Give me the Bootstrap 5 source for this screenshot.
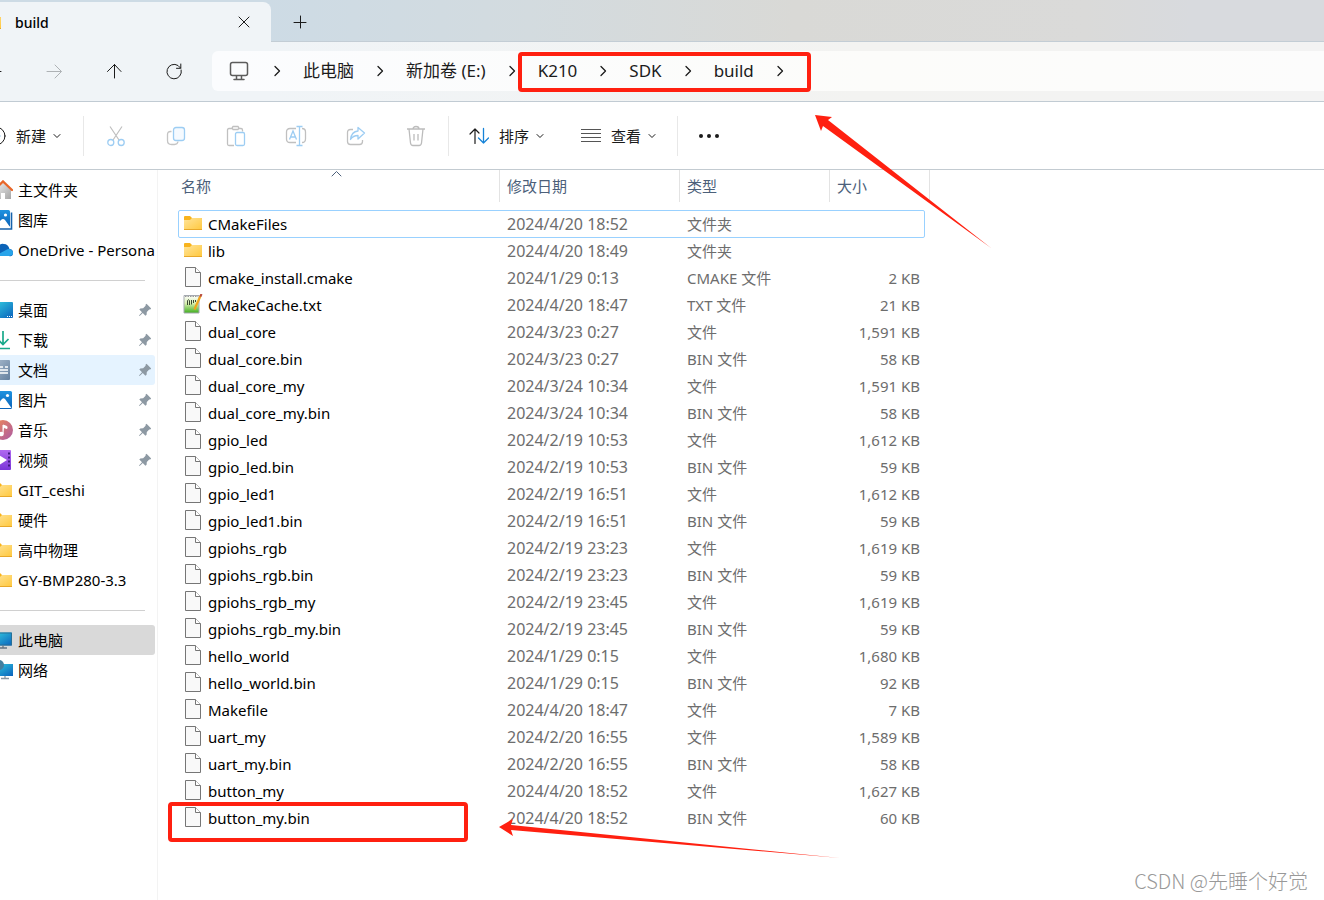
<!DOCTYPE html>
<html lang="zh-CN">
<head>
<meta charset="utf-8">
<meta name="viewport" content="width=device-width, initial-scale=1">
<title>build</title>
<link href="https://cdn.jsdelivr.net/npm/bootstrap@5.3.0/dist/css/bootstrap.min.css" rel="stylesheet">
<style>
body{font-family:"Noto Sans","Noto Sans CJK SC",sans-serif;font-size:15px;line-height:20px;color:#000;background:#fff;overflow-x:hidden}
svg{flex-shrink:0;display:block}
.ln{fill:none;stroke:currentColor;stroke-linecap:round;stroke-linejoin:round}
button{border:0;background:none;padding:0;color:#1b1b1b}
a{color:inherit;text-decoration:none}
.tabstrip{height:42px;padding-top:2px;background:linear-gradient(90deg,#cddbe5 20%,#d3dbdf 40%,#d9d9d6 60%,#dadad9 82%,#d8dade 90%);box-shadow:inset 0 -1px #c3cdd5}
.wintab{width:271px;background:#f0f4f7;border-radius:0 8px 0 0;padding:0 18px 0 0}
.wintab .fold{margin-left:-18px}
.wintab .name{margin-left:13px;font-weight:500;font-size:14px;line-height:22px;padding-top:2px}
.addtab{width:58px}
.locbar{height:60px;padding:9px 0 10px;background:linear-gradient(90deg,#f0f4f7 20%,#f3f3f1 65%,#f3f3f3);border-bottom:1px solid #c1cbd3}
.navbtns{margin-left:-36px}
.sq{width:60px;height:40px}
.dim{color:#aeb2b5}
.address{margin-left:8px;border-radius:6px 0 0 6px;background:linear-gradient(90deg,#fbfcfe,#fcfcfa 60%,#fcfcfc);font-size:17px;line-height:24px;padding-left:17px;color:#1b1b1b}
.address .pc{color:#5c5c5c;margin-right:2px}
.address .arr{margin:0 22px}
.marked{position:relative}
.redbox{position:absolute;border:4px solid #ff2010;border-radius:4px;pointer-events:none;z-index:2}
.redarrow{position:absolute;fill:#ff2010;pointer-events:none;z-index:3}
.redbox.crumbs{inset:-7px -5px -9px -20px}
.redarrow.toloc{left:277px;top:56px}
.tools{height:68px;border-bottom:1px solid #c3cbd1}
.cmd{padding:0 18px;height:40px}
.cmd .lbl{margin:0 6px 0 10px}
.cmd.first{padding:0 19px 0 0;margin-left:-14px}
.blue{stroke:#1683d8}
.sep{width:1px;height:40px;background:#e8e8e8;margin:0 2px}
.side{width:158px;border-right:1px solid #f3f3f3;padding:5px 2px 0 0}
.place{height:30px;border-radius:0 3px 3px 0;white-space:nowrap;overflow:hidden}
.place .ico{margin-left:-7px;margin-right:5px}
.place .pin{margin-left:auto;margin-right:3px;color:#8d99a3}
.hov{background:#e5f3ff}
.sel{background:#d9d9d9}
.rule{height:1px;background:#d0d0d0;margin:15px 10px 14px 0}
.listing{padding-left:21px}
.files{table-layout:fixed;width:751px;border-collapse:separate;border-spacing:0}
.files th{font-weight:400;color:#4c607a;padding:0 0 0 7px;height:40px;vertical-align:top;line-height:33px;position:relative}
.files th::after{content:"";position:absolute;right:0;top:0;width:1px;height:32px;background:#e3e3e3}
.files th:first-child{padding-left:2px}
.files td{height:27px;padding:0 0 0 7px;line-height:26px;color:#6d6d6d;white-space:nowrap}
.files td:first-child{padding-left:4px;color:#000}
.files td:nth-child(2){font-size:16px}
.files td:last-child{padding:0 10px 0 0;text-align:right}
.c1{width:321px}.c2{width:180px}.c3{width:150px}.c4{width:100px}
.entry{gap:5px;height:27px}
.entry svg{margin-bottom:2px}
.focus{position:relative}
.focus::after{content:"";position:absolute;inset:0 5px -1px -1px;border:1px solid #99d1ff;border-radius:2px}
.sorted{position:absolute;left:152px;top:0}
.redbox.target{left:-11px;top:-2px;width:300px;height:40px}
.redarrow.tofile{left:320px;top:14px}
.wm{position:absolute;right:16px;bottom:6px;font-size:20px;line-height:26px;color:#999;font-family:"Noto Sans CJK SC",sans-serif;font-weight:300}
</style>
</head>
<body class="d-flex flex-column min-vh-100 position-relative">
<svg width="0" height="0" class="position-absolute" aria-hidden="true">
<defs>
<linearGradient id="gf" x1="0" y1="0" x2="1" y2="1"><stop offset="0" stop-color="#ffe49a"/><stop offset="1" stop-color="#ffc83d"/></linearGradient>
<linearGradient id="gb" x1="0" y1="0" x2="1" y2="1"><stop offset="0" stop-color="#33cde0"/><stop offset="1" stop-color="#0a62bd"/></linearGradient>
<linearGradient id="gp" x1="0" y1="0" x2="0" y2="1"><stop offset="0" stop-color="#1f93e0"/><stop offset="1" stop-color="#0a62b8"/></linearGradient>
<linearGradient id="gm" x1="0" y1="0" x2="1" y2="1"><stop offset="0" stop-color="#f08a55"/><stop offset="1" stop-color="#ab5aa4"/></linearGradient>
<linearGradient id="gv" x1="0" y1="0" x2="0" y2="1"><stop offset="0" stop-color="#b06af0"/><stop offset="1" stop-color="#7a35d8"/></linearGradient>
<linearGradient id="gd" x1="0" y1="0" x2="1" y2="1"><stop offset="0" stop-color="#a9bacd"/><stop offset="1" stop-color="#64809f"/></linearGradient>
<linearGradient id="gg" x1="0" y1="0" x2="0" y2="1"><stop offset="0" stop-color="#fff"/><stop offset=".45" stop-color="#d8efb0"/><stop offset="1" stop-color="#3fae1c"/></linearGradient>
<linearGradient id="gh" x1="0" y1="0" x2="1" y2="1"><stop offset="0" stop-color="#eee"/><stop offset="1" stop-color="#a5a5a5"/></linearGradient>
</defs>
<symbol id="folder" viewBox="0 0 20 20"><path d="M1 4q0-1 1-1h5l2 2h9q1 0 1 1v4H1z" fill="#f8b31c"/><path d="M1 7h6l2-2h9q1 0 1 1v10q0 1-1 1H2q-1 0-1-1z" fill="url(#gf)"/><path d="M1 16.500h18" stroke="#e8a82a" fill="none"/></symbol>
<symbol id="file" viewBox="0 0 20 20"><path d="M2.500.5h10l5 5v14h-15z" fill="#f9f9f9" stroke="#767676"/><path d="M12.500.5v5h5" fill="#fff" stroke="#767676"/></symbol>
<symbol id="txt" viewBox="0 0 20 20"><path d="M1 1.500h15v17.500H1z" fill="url(#gg)" stroke="#a5a9b0"/><path d="M2 2.500h13" stroke="#999" stroke-dasharray="1.500 1"/><path d="M4.500 11V6.500q1-1.500 2 0V11M8.500 6v4.500M10.500 6v3M12.500 6v2" fill="none" stroke="#384830"/><path d="M17.500 2l-5 11-1 2.500" stroke="#f0a51c" stroke-width="2.200" fill="none"/><path d="M18.500 0l-1.200 2.600" stroke="#b84c3c" stroke-width="2.200"/></symbol>
<symbol id="chev" viewBox="0 0 10 10"><path class="ln" d="M2 3.500l3 3 3-3" stroke-width="1"/></symbol>
<symbol id="more" viewBox="0 0 8 12"><path class="ln" d="M2 1.500L6.500 6 2 10.500" stroke-width="1.300"/></symbol>
<symbol id="pin" viewBox="0 0 14 14"><path d="M8.500.8L13.200 5.500l-1 1-1-.1-2.400 2.500-.2 2.800-1.200 1L4.800 10 1.600 13 1 12.500 4 9.200 1.300 6.600l1-1.200 2.800-.2 2.500-2.400-.1-1z" fill="currentColor"/></symbol>
<symbol id="screen" viewBox="0 0 20 20"><path d="M0 2.500h19v13H0z" fill="url(#gb)"/><path d="M.5 3h18v12H.5z" fill="none" stroke="#286f96"/><path d="M10 15.500v2M6 18h8" stroke="#667482" stroke-width="1.300"/></symbol>
<symbol id="pic" viewBox="0 0 20 20"><rect y="1" width="19" height="18" rx="1.500" fill="url(#gp)"/><path d="M1 18l8-9q1.500-1.500 3 0l6.500 9z" fill="#fff"/><circle cx="14.500" cy="5.500" r="1.600" fill="#fff"/></symbol>
</svg>

<header>
 <div class="tabstrip d-flex">
  <div class="wintab d-flex align-items-center">
   <svg class="fold" width="20" height="20"><use href="#folder"/></svg><span class="name">build</span>
   <button class="ms-auto" aria-label="关闭标签页"><svg width="18" height="18"><path class="ln" d="M4 4l10 10M14 4L4 14"/></svg></button>
  </div>
  <button class="addtab d-flex align-items-center justify-content-center" aria-label="新标签页"><svg width="14" height="14"><path class="ln" d="M1 7.500h12M7.500 1v12"/></svg></button>
 </div>
 <div class="locbar d-flex">
  <div class="navbtns d-flex">
   <button class="sq d-flex align-items-center justify-content-center" aria-label="后退"><svg width="18" height="18"><path class="ln" d="M16 9.500H1M8 2.500L1 9.500l7 7"/></svg></button>
   <button class="sq dim d-flex align-items-center justify-content-center" aria-label="前进"><svg width="18" height="18"><path class="ln" d="M2 9.500h14M10 3l6.500 6.500L10 16"/></svg></button>
   <button class="sq d-flex align-items-center justify-content-center" aria-label="上移"><svg width="18" height="18"><path class="ln" d="M9.500 16V2.500M2.500 9.500l7-7 6.500 7"/></svg></button>
   <button class="sq d-flex align-items-center justify-content-center" aria-label="刷新"><svg width="18" height="18"><path class="ln" d="M16.200 8A7.200 7.200 0 1 1 13 3.500L15.500 6M15.800 2v4.300h-4.300"/></svg></button>
  </div>
  <nav class="address flex-grow-1 d-flex align-items-center" aria-label="路径">
   <svg class="pc" width="20" height="20"><path class="ln" stroke-width="1.500" d="M3.500 1.500h13q2 0 2 2v9q0 2-2 2h-13q-2 0-2-2v-9q0-2 2-2zM7.500 15v3M12.500 15v3M5 18.500h10"/></svg>
   <svg class="arr" width="8" height="12"><use href="#more"/></svg>
   <a href="#">此电脑</a><svg class="arr" width="8" height="12"><use href="#more"/></svg>
   <a href="#">新加卷 (E:)</a><svg class="arr" width="8" height="12"><use href="#more"/></svg>
   <div class="marked d-flex align-items-center">
    <a href="#">K210</a><svg class="arr" width="8" height="12"><use href="#more"/></svg>
    <a href="#">SDK</a><svg class="arr" width="8" height="12"><use href="#more"/></svg>
    <a href="#">build</a><svg class="arr" width="8" height="12"><use href="#more"/></svg>
    <span class="redbox crumbs"></span>
    <svg class="redarrow toloc" width="178" height="136"><path d="M0 0l17 2-4 3 163 128L8 11l-2 5z"/></svg>
   </div>
  </nav>
 </div>
 <div class="tools d-flex align-items-center" role="toolbar">
  <button class="cmd first d-flex align-items-center"><svg width="20" height="20"><circle class="ln" cx="10" cy="10" r="9"/><path class="ln blue" d="M6 10h8M10 6v8"/></svg><span class="lbl">新建</span><svg width="10" height="10"><use href="#chev"/></svg></button>
  <span class="sep"></span>
  <button class="sq d-flex align-items-center justify-content-center" aria-label="剪切"><svg width="20" height="22" fill="none"><path d="M4 1.500l9 13.500M16 1.500L7 15" stroke="#bfbfbf" stroke-width="1.200"/><circle cx="4.800" cy="17.500" r="3" stroke="#9dcdf3" stroke-width="1.300"/><circle cx="15.200" cy="17.500" r="3" stroke="#9dcdf3" stroke-width="1.300"/></svg></button>
  <button class="sq d-flex align-items-center justify-content-center" aria-label="复制"><svg width="20" height="20" fill="none"><path d="M5.500 5.500H4.500q-3 0-3 3v6q0 4 4 4h3q3 0 3.500-3" stroke="#c4c4c4" stroke-width="1.300"/><rect x="7.500" y="1.500" width="11" height="13" rx="2.500" stroke="#9dcdf3" stroke-width="1.300" fill="#f5faff"/></svg></button>
  <button class="sq d-flex align-items-center justify-content-center" aria-label="粘贴"><svg width="20" height="22" fill="none"><path d="M6 3.500H3q-1.500 0-1.500 1.500v14q0 1.500 1.500 1.500h5M13 3.500h2q1.500 0 1.500 1.500v1.500M7 1.500h5q1.500 1.500 0 3H7q-1.500-1.500 0-3z" stroke="#c0c0c0" stroke-width="1.300"/><rect x="9.500" y="7.500" width="9" height="13" rx="1.500" stroke="#9dcdf3" stroke-width="1.300"/></svg></button>
  <button class="sq d-flex align-items-center justify-content-center" aria-label="重命名"><svg width="22" height="22" fill="none"><path d="M11 3.500H5q-3.500 0-3.500 3.500v7q0 3.500 3.500 3.500h6M17 3.500q3.500 0 3.500 3.500v7q0 3.500-3.500 3.500" stroke="#c0c0c0" stroke-width="1.300"/><path d="M14.500 1.500v19M11.500 1.500h6M11.500 20.500h6M4.500 14.500l3.500-8.500 3.500 8.500M5.500 12h5" stroke="#9dcdf3" stroke-width="1.300"/></svg></button>
  <button class="sq d-flex align-items-center justify-content-center" aria-label="共享"><svg width="20" height="20" fill="none"><path d="M7 3.500H4.500q-3 0-3 3v9q0 3 3 3h9q3 0 3-3V14" stroke="#c0c0c0" stroke-width="1.300"/><path d="M12 1.500l6.500 5.500-6.500 6V9.500Q7 9.500 4.500 13.500 5.500 5.500 12 5z" stroke="#9dcdf3" stroke-width="1.300" stroke-linejoin="round"/></svg></button>
  <button class="sq d-flex align-items-center justify-content-center" aria-label="删除"><svg width="20" height="22" fill="none" stroke="#bcbcbc" stroke-width="1.300"><path d="M1 4h18M7 4q0-2.500 3-2.500T13 4M3 4l1.500 14q.3 2.500 2.500 2.500h6q2.200 0 2.500-2.500L17 4M8 9v6.500M12 9v6.500"/></svg></button>
  <span class="sep"></span>
  <button class="cmd d-flex align-items-center"><svg width="20" height="18"><path class="ln" d="M6 16.500V2M1 7l5-5 4 4" stroke-width="1.200"/><path class="ln blue" d="M14.500 1.500V16M9.500 11l5 5 5-5" stroke-width="1.300"/></svg><span class="lbl">排序</span><svg width="10" height="10"><use href="#chev"/></svg></button>
  <button class="cmd d-flex align-items-center"><svg width="20" height="14"><path d="M0 .5h20M0 4.500h20M0 8.500h20M0 12.500h20" stroke="#555"/></svg><span class="lbl">查看</span><svg width="10" height="10"><use href="#chev"/></svg></button>
  <span class="sep"></span>
  <button class="cmd" aria-label="更多"><svg width="22" height="6" fill="#1b1b1b"><circle cx="3" cy="3" r="2"/><circle cx="11" cy="3" r="2"/><circle cx="19" cy="3" r="2"/></svg></button>
 </div>
</header>

<main class="d-flex flex-grow-1">
 <nav class="side flex-shrink-0" aria-label="位置">
  <a href="#" class="place d-flex align-items-center"><svg class="ico" width="20" height="20"><path d="M3 9l7-6 8 7v9h-6v-6H8v6H3z" fill="url(#gh)"/><path d="M1 10l9-8.500 9 8.500" fill="none" stroke="#e8672a" stroke-width="2.400" stroke-linecap="round"/></svg>主文件夹</a>
  <a href="#" class="place d-flex align-items-center"><svg class="ico" width="20" height="20"><path d="M3 19h15.500V2.500" fill="none" stroke="#1762ab" stroke-width="1.600"/><rect width="17" height="17" rx="1.500" fill="url(#gp)"/><path d="M1 17l7-7q2-2 4 0l5 7z" fill="#fff"/><circle cx="12.500" cy="5" r="1.600" fill="#fff"/></svg>图库</a>
  <a href="#" class="place d-flex align-items-center"><svg class="ico" width="20" height="20"><path d="M4 9q2-6 7-5 4 0 5.500 5 3.500 0 3.500 4t-4 3H3z" fill="#0c63b7"/><path d="M2 16l11-6q3-2 5.500 0Q20 11 20 13q0 3-4 3z" fill="#28a4ea"/></svg>OneDrive - Personal</a>
  <div class="rule"></div>
  <a href="#" class="place d-flex align-items-center"><svg class="ico" width="20" height="20"><rect y="2" width="20" height="16" rx="1" fill="url(#gb)"/><path d="M14 16.500h5" stroke="#fff" stroke-dasharray="1 1"/></svg>桌面<svg class="pin" width="14" height="14"><use href="#pin"/></svg></a>
  <a href="#" class="place d-flex align-items-center"><svg class="ico" width="20" height="20"><path d="M10 1v13M4.500 9l5.500 5.500L15.500 9M3 18.500h14" fill="none" stroke="#18a98a" stroke-width="1.700"/></svg>下载<svg class="pin" width="14" height="14"><use href="#pin"/></svg></a>
  <a href="#" class="place hov d-flex align-items-center"><svg class="ico" width="20" height="20"><rect x="1" width="16" height="20" rx="1" fill="url(#gd)"/><path d="M4 7h6M4 10h11M4 13h11M12 7h3" stroke="#fff" stroke-width="1.500"/></svg>文档<svg class="pin" width="14" height="14"><use href="#pin"/></svg></a>
  <a href="#" class="place d-flex align-items-center"><svg class="ico" width="20" height="20"><use href="#pic"/></svg>图片<svg class="pin" width="14" height="14"><use href="#pin"/></svg></a>
  <a href="#" class="place d-flex align-items-center"><svg class="ico" width="20" height="20"><circle cx="10" cy="10" r="10" fill="url(#gm)"/><path d="M10 14V5l4 1.500v2L11 7.500" fill="#fff" stroke="#fff"/><circle cx="8.500" cy="14" r="2.300" fill="#fff"/></svg>音乐<svg class="pin" width="14" height="14"><use href="#pin"/></svg></a>
  <a href="#" class="place d-flex align-items-center"><svg class="ico" width="20" height="20"><rect width="18" height="20" rx="1" fill="url(#gv)"/><path d="M6 5l8 5-8 5z" fill="#fff"/><path d="M16 2.500v16" stroke="#3e1a80" stroke-width="2" stroke-dasharray="2 2"/></svg>视频<svg class="pin" width="14" height="14"><use href="#pin"/></svg></a>
  <a href="#" class="place d-flex align-items-center"><svg class="ico" width="20" height="20"><use href="#folder"/></svg>GIT_ceshi</a>
  <a href="#" class="place d-flex align-items-center"><svg class="ico" width="20" height="20"><use href="#folder"/></svg>硬件</a>
  <a href="#" class="place d-flex align-items-center"><svg class="ico" width="20" height="20"><use href="#folder"/></svg>高中物理</a>
  <a href="#" class="place d-flex align-items-center"><svg class="ico" width="20" height="20"><use href="#folder"/></svg>GY-BMP280-3.3</a>
  <div class="rule"></div>
  <a href="#" class="place sel d-flex align-items-center"><svg class="ico" width="20" height="20"><use href="#screen"/></svg>此电脑</a>
  <a href="#" class="place d-flex align-items-center"><svg class="ico" width="20" height="20"><path d="M1 4h19v12H1z" fill="url(#gb)"/><path d="M12 16v2M8 18.500h8" stroke="#8795a2" stroke-width="1.300"/><circle cx="6" cy="5" r="5" fill="#447f9f"/></svg>网络</a>
 </nav>
 <section class="listing flex-grow-1">
  <table class="files">
   <colgroup><col class="c1"><col class="c2"><col class="c3"><col class="c4"></colgroup>
   <thead><tr><th scope="col">名称<svg class="sorted" width="11" height="8"><path class="ln" d="M1 6l4.500-4.500L10 6"/></svg></th><th scope="col">修改日期</th><th scope="col">类型</th><th scope="col">大小</th></tr></thead>
   <tbody>
    <tr class="focus"><td><div class="entry d-flex align-items-center"><svg width="20" height="20"><use href="#folder"/></svg>CMakeFiles</div></td><td>2024/4/20 18:52</td><td>文件夹</td><td></td></tr>
    <tr><td><div class="entry d-flex align-items-center"><svg width="20" height="20"><use href="#folder"/></svg>lib</div></td><td>2024/4/20 18:49</td><td>文件夹</td><td></td></tr>
    <tr><td><div class="entry d-flex align-items-center"><svg width="20" height="20"><use href="#file"/></svg>cmake_install.cmake</div></td><td>2024/1/29 0:13</td><td>CMAKE 文件</td><td>2 KB</td></tr>
    <tr><td><div class="entry d-flex align-items-center"><svg width="20" height="20"><use href="#txt"/></svg>CMakeCache.txt</div></td><td>2024/4/20 18:47</td><td>TXT 文件</td><td>21 KB</td></tr>
    <tr><td><div class="entry d-flex align-items-center"><svg width="20" height="20"><use href="#file"/></svg>dual_core</div></td><td>2024/3/23 0:27</td><td>文件</td><td>1,591 KB</td></tr>
    <tr><td><div class="entry d-flex align-items-center"><svg width="20" height="20"><use href="#file"/></svg>dual_core.bin</div></td><td>2024/3/23 0:27</td><td>BIN 文件</td><td>58 KB</td></tr>
    <tr><td><div class="entry d-flex align-items-center"><svg width="20" height="20"><use href="#file"/></svg>dual_core_my</div></td><td>2024/3/24 10:34</td><td>文件</td><td>1,591 KB</td></tr>
    <tr><td><div class="entry d-flex align-items-center"><svg width="20" height="20"><use href="#file"/></svg>dual_core_my.bin</div></td><td>2024/3/24 10:34</td><td>BIN 文件</td><td>58 KB</td></tr>
    <tr><td><div class="entry d-flex align-items-center"><svg width="20" height="20"><use href="#file"/></svg>gpio_led</div></td><td>2024/2/19 10:53</td><td>文件</td><td>1,612 KB</td></tr>
    <tr><td><div class="entry d-flex align-items-center"><svg width="20" height="20"><use href="#file"/></svg>gpio_led.bin</div></td><td>2024/2/19 10:53</td><td>BIN 文件</td><td>59 KB</td></tr>
    <tr><td><div class="entry d-flex align-items-center"><svg width="20" height="20"><use href="#file"/></svg>gpio_led1</div></td><td>2024/2/19 16:51</td><td>文件</td><td>1,612 KB</td></tr>
    <tr><td><div class="entry d-flex align-items-center"><svg width="20" height="20"><use href="#file"/></svg>gpio_led1.bin</div></td><td>2024/2/19 16:51</td><td>BIN 文件</td><td>59 KB</td></tr>
    <tr><td><div class="entry d-flex align-items-center"><svg width="20" height="20"><use href="#file"/></svg>gpiohs_rgb</div></td><td>2024/2/19 23:23</td><td>文件</td><td>1,619 KB</td></tr>
    <tr><td><div class="entry d-flex align-items-center"><svg width="20" height="20"><use href="#file"/></svg>gpiohs_rgb.bin</div></td><td>2024/2/19 23:23</td><td>BIN 文件</td><td>59 KB</td></tr>
    <tr><td><div class="entry d-flex align-items-center"><svg width="20" height="20"><use href="#file"/></svg>gpiohs_rgb_my</div></td><td>2024/2/19 23:45</td><td>文件</td><td>1,619 KB</td></tr>
    <tr><td><div class="entry d-flex align-items-center"><svg width="20" height="20"><use href="#file"/></svg>gpiohs_rgb_my.bin</div></td><td>2024/2/19 23:45</td><td>BIN 文件</td><td>59 KB</td></tr>
    <tr><td><div class="entry d-flex align-items-center"><svg width="20" height="20"><use href="#file"/></svg>hello_world</div></td><td>2024/1/29 0:15</td><td>文件</td><td>1,680 KB</td></tr>
    <tr><td><div class="entry d-flex align-items-center"><svg width="20" height="20"><use href="#file"/></svg>hello_world.bin</div></td><td>2024/1/29 0:15</td><td>BIN 文件</td><td>92 KB</td></tr>
    <tr><td><div class="entry d-flex align-items-center"><svg width="20" height="20"><use href="#file"/></svg>Makefile</div></td><td>2024/4/20 18:47</td><td>文件</td><td>7 KB</td></tr>
    <tr><td><div class="entry d-flex align-items-center"><svg width="20" height="20"><use href="#file"/></svg>uart_my</div></td><td>2024/2/20 16:55</td><td>文件</td><td>1,589 KB</td></tr>
    <tr><td><div class="entry d-flex align-items-center"><svg width="20" height="20"><use href="#file"/></svg>uart_my.bin</div></td><td>2024/2/20 16:55</td><td>BIN 文件</td><td>58 KB</td></tr>
    <tr><td><div class="entry d-flex align-items-center"><svg width="20" height="20"><use href="#file"/></svg>button_my</div></td><td>2024/4/20 18:52</td><td>文件</td><td>1,627 KB</td></tr>
    <tr><td class="marked"><div class="entry d-flex align-items-center"><svg width="20" height="20"><use href="#file"/></svg>button_my.bin</div><span class="redbox target"></span><svg class="redarrow tofile" width="342" height="42"><path d="M0 9l14-8-2 6 329 33L12 12l2 6z"/></svg></td><td>2024/4/20 18:52</td><td>BIN 文件</td><td>60 KB</td></tr>
   </tbody>
  </table>
 </section>
</main>
<div class="wm">CSDN @先睡个好觉</div>
<script src="https://cdn.jsdelivr.net/npm/bootstrap@5.3.0/dist/js/bootstrap.bundle.min.js"></script>
</body>
</html>
